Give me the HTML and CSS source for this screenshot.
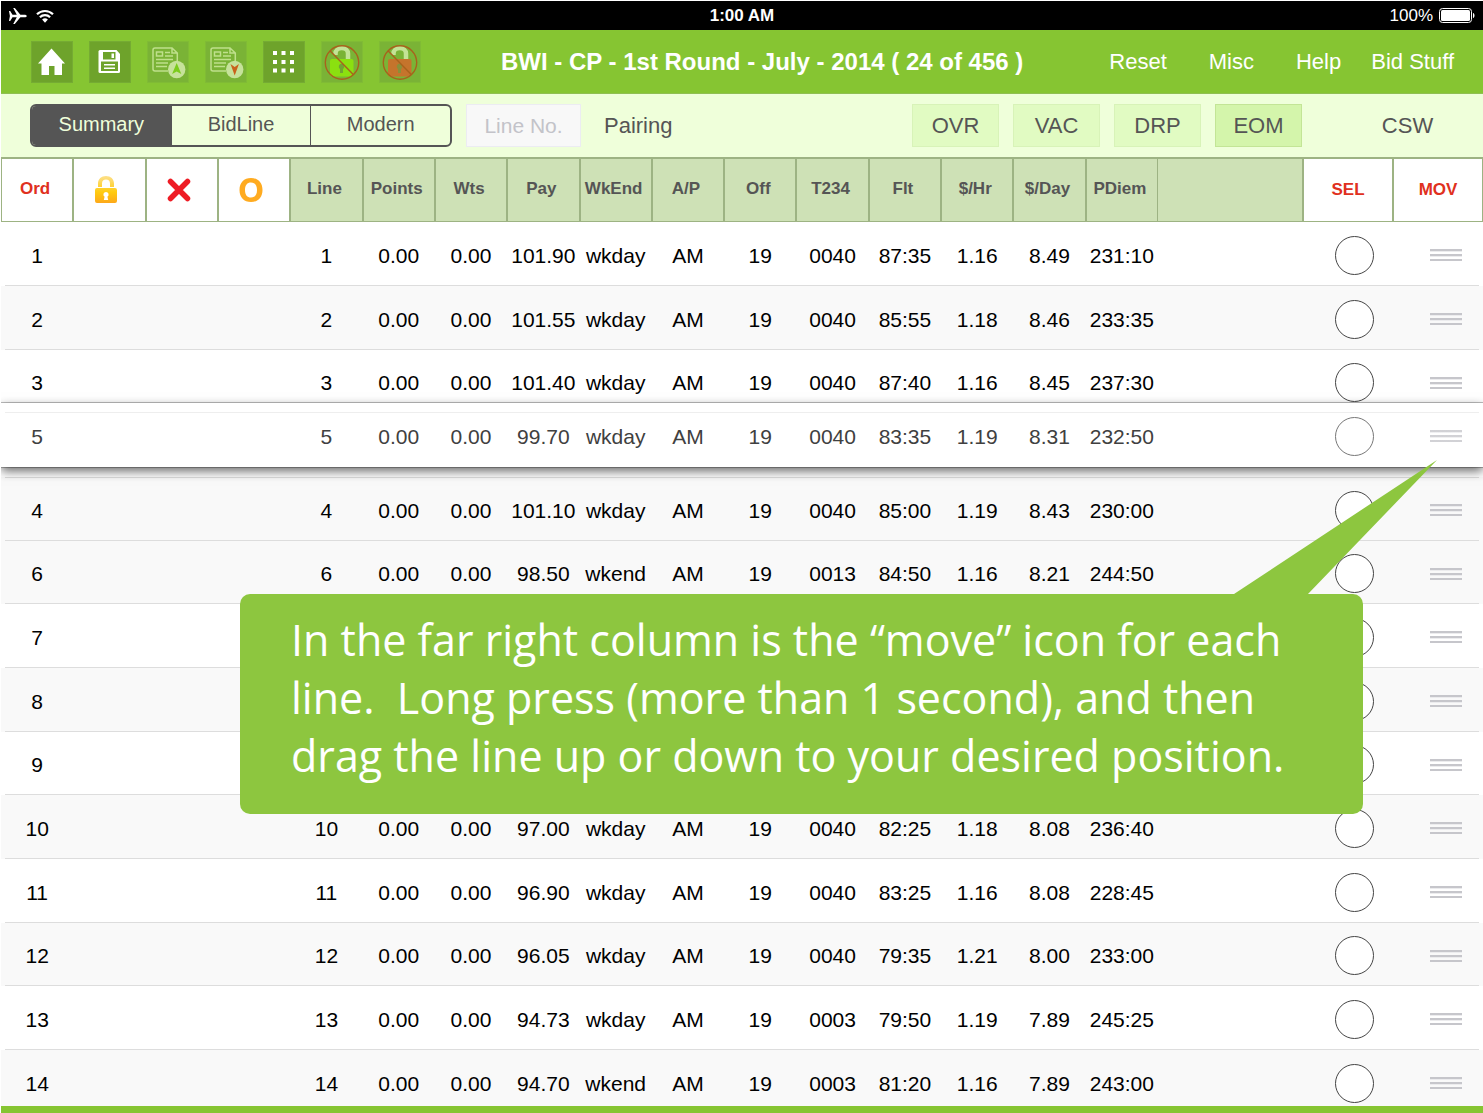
FILE: index.html
```html
<!DOCTYPE html>
<html lang="en">
<head>
<meta charset="utf-8">
<meta name="viewport" content="width=device-width, initial-scale=1">
<title>BWI - CP - 1st Round - July - 2014</title>
<link rel="stylesheet" href="styles.css">
</head>
<body>
<div class="app">
  <div class="status">
    <div class="status-side">
      <svg class="plane" viewBox="0 0 18 16" width="18" height="16" aria-hidden="true"><path fill="#fff" d="M0 3h1.200l2.300 3.700h4.300L4.200 0h1.600l5.600 6.700h4.100c1.200 0 2.300.6 2.300 1.300s-1.100 1.300-2.300 1.300h-4.100L5.800 16H4.200l3.600-6.700H3.500L1.200 13H0l.9-5z"/></svg>
      <svg viewBox="0 0 18 14" width="18" height="14" aria-hidden="true"><g fill="none" stroke="#fff" stroke-width="2.200"><path d="M1 5.200a11.600 11.600 0 0 1 16 0"/><path d="M3.900 8.300a7.300 7.300 0 0 1 10.200 0"/></g><path fill="#fff" d="M9 13.800l-2.900-3.200a4.300 4.300 0 0 1 5.800 0z"/></svg>
    </div>
    <span class="clock">1:00 AM</span>
    <div class="status-side status-right">
      <span>100%</span>
      <svg viewBox="0 0 36 15" width="36" height="15" aria-hidden="true"><rect x=".5" y=".5" width="32" height="14" rx="3" fill="none" stroke="#fff"/><rect x="2" y="2" width="29" height="11" rx="1.500" fill="#fff"/><path fill="#fff" d="M34 5c2 .6 2 4.400 0 5z"/></svg>
    </div>
  </div>

  <header class="toolbar">
    <div class="tools">
      <button class="tool" type="button" aria-label="Home"><svg viewBox="0 0 42 42"><path fill="#fff" d="M20.500 7.500L34 22.500h-3V34h-7.500v-9h-5.500v9h-7.500V22.500H7z"/></svg></button>
      <button class="tool" type="button" aria-label="Save"><svg viewBox="0 0 42 42"><path fill="#fff" d="M11 9h16.500l3.500 4v17.500q0 1.500-1.500 1.500H11q-1.500 0-1.500-1.500v-20Q9.500 9 11 9z"/><path fill="#6ea32b" d="M14 11h12.500v7.500H14zM12 20.500h17V30H12z"/><path fill="#fff" d="M22.500 12.500h2.500v4.500h-2.500zM15 23h11v1.500H15zM15 26.500h11V28H15z"/></svg></button>
      <button class="tool" type="button" aria-label="Move up" disabled><svg viewBox="0 0 42 42"><g fill="none" stroke="#bfe08c" stroke-width="1.500"><path d="M21 30H8q-2 0-2-2V9q0-2 2-2h17l5.300 5v8M25 7v5h5"/><path d="M9.500 11h6v4h-6zM18 11.500h5M18 15h8M9 18.500h17M9 22h12M9 25.500h11"/></g><circle cx="29.700" cy="28.500" r="8.700" fill="#c6e29b"/><path fill="#7bcb1d" d="M29.700 22l4.600 11-4.600-2.600-4.600 2.600z"/></svg></button>
      <button class="tool" type="button" aria-label="Move down" disabled><svg viewBox="0 0 42 42"><g fill="none" stroke="#bfe08c" stroke-width="1.500"><path d="M21 30H8q-2 0-2-2V9q0-2 2-2h17l5.300 5v8M25 7v5h5"/><path d="M9.500 11h6v4h-6zM18 11.500h5M18 15h8M9 18.500h17M9 22h12M9 25.500h11"/></g><circle cx="29.700" cy="28.500" r="8.700" fill="#c6e29b"/><path fill="#c9621b" d="M29.700 34.500L25.500 23l4.200 3 4.200-3z"/></svg></button>
      <button class="tool" type="button" aria-label="Grid"><svg viewBox="0 0 42 42"><path fill="#fff" d="M10 10h4v4h-4zm8.500 0h4v4h-4zm8.500 0h4v4h-4zM10 19h4v4h-4zm8.500 0h4v4h-4zm8.500 0h4v4h-4zM10 27.500h4v4h-4zm8.500 0h4v4h-4zm8.500 0h4v4h-4z"/></svg></button>
      <button class="tool" type="button" aria-label="Clear top locks" disabled><svg viewBox="0 0 42 42"><path d="M14.500 14v-1.500a6.200 5.500 0 0 1 12.500 0V18" fill="none" stroke="#c3e396" stroke-width="4.500"/><rect x="9" y="18" width="23.500" height="17.500" rx="2" fill="#8be010"/><path fill="#6fa534" d="M20.500 22.500a3.200 3.200 0 0 1 1.500 5.700V32h-3v-3.800a3.200 3.200 0 0 1 1.500-5.700z"/><g fill="none" stroke="#a8621c" stroke-width="1.400"><circle cx="21" cy="21.500" r="16.700"/><path d="M9 9.700l23.500 24"/></g></svg></button>
      <button class="tool" type="button" aria-label="Clear bottom locks" disabled><svg viewBox="0 0 42 42"><path d="M14.500 14v-1.500a6.200 5.500 0 0 1 12.500 0V18" fill="none" stroke="#c3e396" stroke-width="4.500"/><rect x="9" y="18" width="23.500" height="17.500" rx="2" fill="#c5742c"/><path fill="#8a8f38" d="M20.500 22.500a3.200 3.200 0 0 1 1.500 5.700V32h-3v-3.800a3.200 3.200 0 0 1 1.500-5.700z"/><g fill="none" stroke="#a8621c" stroke-width="1.400"><circle cx="21" cy="21.500" r="16.700"/><path d="M9 9.700l23.500 24"/></g></svg></button>
    </div>
    <h1 class="title">BWI - CP - 1st Round - July - 2014 ( 24 of 456 )</h1>
    <nav class="menu">
      <button type="button">Reset</button>
      <button type="button">Misc</button>
      <button type="button">Help</button>
      <button type="button">Bid Stuff</button>
    </nav>
  </header>

  <div class="filters">
    <div class="segments">
      <button class="segment selected" type="button" aria-pressed="true">Summary</button>
      <button class="segment" type="button" aria-pressed="false">BidLine</button>
      <button class="segment" type="button" aria-pressed="false">Modern</button>
    </div>
    <input class="line-no" type="text" placeholder="Line No." aria-label="Line No.">
    <button class="plain" type="button">Pairing</button>
    <div class="toggles">
      <button class="toggle" type="button">OVR</button>
      <button class="toggle" type="button">VAC</button>
      <button class="toggle" type="button">DRP</button>
      <button class="toggle on" type="button">EOM</button>
    </div>
    <button class="plain csw" type="button">CSW</button>
  </div>

  <main class="lines">
    <table class="grid">
      <colgroup><col span="16"><col class="col-filler"><col class="col-action" span="2"></colgroup>
      <thead>
        <tr>
          <th class="key" scope="col">Ord</th>
          <th class="key mark" scope="col" aria-label="Lock"><svg viewBox="0 0 24 30" width="24" height="30"><defs><linearGradient id="gold" x1="0" y1="0" x2="0" y2="1"><stop offset="0" stop-color="#fde08a"/><stop offset=".6" stop-color="#ffcb10"/><stop offset="1" stop-color="#fda81a"/></linearGradient></defs><path fill="url(#gold)" fill-rule="evenodd" d="M4 12V8.500C4 4 7.300 1 12 1s8 3 8 7.500V12h-4V8.500C16 6 14.500 4.500 12 4.500S8 6 8 8.500V12zM3 13h18q2 0 2 2v11q0 2-2 2H3q-2 0-2-2V15q0-2 2-2zM12 17a2.600 2.600 0 0 0-1.400 4.800L9.800 25h4.400l-.8-3.200A2.600 2.600 0 0 0 12 17z"/></svg></th>
          <th class="key mark" scope="col" aria-label="Exclude"><svg viewBox="0 0 24 24" width="24" height="24"><path d="M3.500 3.500l17 17M20.500 3.500l-17 17" stroke="#ee1c25" stroke-width="5.500" stroke-linecap="round"/></svg></th>
          <th class="key mark" scope="col" aria-label="Open"><svg viewBox="0 0 24 26" width="24" height="26"><path fill="#ffab20" fill-rule="evenodd" d="M12 1c7 0 11.500 4.500 11.500 12S19 25 12 25 .5 20.500.5 13 5 1 12 1zm0 4.500c-3.800 0-6 2.500-6 7.500s2.200 7.500 6 7.500 6-2.500 6-7.500-2.200-7.500-6-7.500z"/></svg></th>
          <th scope="col">Line</th><th scope="col">Points</th><th scope="col">Wts</th><th scope="col">Pay</th><th scope="col">WkEnd</th><th scope="col">A/P</th><th scope="col">Off</th><th scope="col">T234</th><th scope="col">Flt</th><th scope="col">$/Hr</th><th scope="col">$/Day</th><th scope="col">PDiem</th>
          <th class="filler"></th>
          <th class="key action" scope="col">SEL</th>
          <th class="key action" scope="col">MOV</th>
        </tr>
      </thead>
      <tbody>
        <tr><td>1</td><td colspan="3"></td><td>1</td><td>0.00</td><td>0.00</td><td>101.90</td><td>wkday</td><td>AM</td><td>19</td><td>0040</td><td>87:35</td><td>1.16</td><td>8.49</td><td>231:10</td><td></td><td class="sel"><input type="checkbox" aria-label="Select line 1"></td><td class="mov"><button class="grip" type="button" aria-label="Move line 1"></button></td></tr>
        <tr><td>2</td><td colspan="3"></td><td>2</td><td>0.00</td><td>0.00</td><td>101.55</td><td>wkday</td><td>AM</td><td>19</td><td>0040</td><td>85:55</td><td>1.18</td><td>8.46</td><td>233:35</td><td></td><td class="sel"><input type="checkbox" aria-label="Select line 2"></td><td class="mov"><button class="grip" type="button" aria-label="Move line 2"></button></td></tr>
        <tr><td>3</td><td colspan="3"></td><td>3</td><td>0.00</td><td>0.00</td><td>101.40</td><td>wkday</td><td>AM</td><td>19</td><td>0040</td><td>87:40</td><td>1.16</td><td>8.45</td><td>237:30</td><td></td><td class="sel"><input type="checkbox" aria-label="Select line 3"></td><td class="mov"><button class="grip" type="button" aria-label="Move line 3"></button></td></tr>
        <tr class="dragged"><td>5</td><td colspan="3"></td><td>5</td><td>0.00</td><td>0.00</td><td>99.70</td><td>wkday</td><td>AM</td><td>19</td><td>0040</td><td>83:35</td><td>1.19</td><td>8.31</td><td>232:50</td><td></td><td class="sel"><input type="checkbox" aria-label="Select line 5"></td><td class="mov"><button class="grip" type="button" aria-label="Move line 5"></button></td></tr>
        <tr class="displaced"><td>4</td><td colspan="3"></td><td>4</td><td>0.00</td><td>0.00</td><td>101.10</td><td>wkday</td><td>AM</td><td>19</td><td>0040</td><td>85:00</td><td>1.19</td><td>8.43</td><td>230:00</td><td></td><td class="sel"><input type="checkbox" aria-label="Select line 4"></td><td class="mov"><button class="grip" type="button" aria-label="Move line 4"></button></td></tr>
        <tr><td>6</td><td colspan="3"></td><td>6</td><td>0.00</td><td>0.00</td><td>98.50</td><td>wkend</td><td>AM</td><td>19</td><td>0013</td><td>84:50</td><td>1.16</td><td>8.21</td><td>244:50</td><td></td><td class="sel"><input type="checkbox" aria-label="Select line 6"></td><td class="mov"><button class="grip" type="button" aria-label="Move line 6"></button></td></tr>
        <tr><td>7</td><td colspan="16"></td><td class="sel"><input type="checkbox" aria-label="Select line 7"></td><td class="mov"><button class="grip" type="button" aria-label="Move line 7"></button></td></tr>
        <tr><td>8</td><td colspan="16"></td><td class="sel"><input type="checkbox" aria-label="Select line 8"></td><td class="mov"><button class="grip" type="button" aria-label="Move line 8"></button></td></tr>
        <tr><td>9</td><td colspan="16"></td><td class="sel"><input type="checkbox" aria-label="Select line 9"></td><td class="mov"><button class="grip" type="button" aria-label="Move line 9"></button></td></tr>
        <tr><td>10</td><td colspan="3"></td><td>10</td><td>0.00</td><td>0.00</td><td>97.00</td><td>wkday</td><td>AM</td><td>19</td><td>0040</td><td>82:25</td><td>1.18</td><td>8.08</td><td>236:40</td><td></td><td class="sel"><input type="checkbox" aria-label="Select line 10"></td><td class="mov"><button class="grip" type="button" aria-label="Move line 10"></button></td></tr>
        <tr><td>11</td><td colspan="3"></td><td>11</td><td>0.00</td><td>0.00</td><td>96.90</td><td>wkday</td><td>AM</td><td>19</td><td>0040</td><td>83:25</td><td>1.16</td><td>8.08</td><td>228:45</td><td></td><td class="sel"><input type="checkbox" aria-label="Select line 11"></td><td class="mov"><button class="grip" type="button" aria-label="Move line 11"></button></td></tr>
        <tr><td>12</td><td colspan="3"></td><td>12</td><td>0.00</td><td>0.00</td><td>96.05</td><td>wkday</td><td>AM</td><td>19</td><td>0040</td><td>79:35</td><td>1.21</td><td>8.00</td><td>233:00</td><td></td><td class="sel"><input type="checkbox" aria-label="Select line 12"></td><td class="mov"><button class="grip" type="button" aria-label="Move line 12"></button></td></tr>
        <tr><td>13</td><td colspan="3"></td><td>13</td><td>0.00</td><td>0.00</td><td>94.73</td><td>wkday</td><td>AM</td><td>19</td><td>0003</td><td>79:50</td><td>1.19</td><td>7.89</td><td>245:25</td><td></td><td class="sel"><input type="checkbox" aria-label="Select line 13"></td><td class="mov"><button class="grip" type="button" aria-label="Move line 13"></button></td></tr>
        <tr><td>14</td><td colspan="3"></td><td>14</td><td>0.00</td><td>0.00</td><td>94.70</td><td>wkend</td><td>AM</td><td>19</td><td>0003</td><td>81:20</td><td>1.16</td><td>7.89</td><td>243:00</td><td></td><td class="sel"><input type="checkbox" aria-label="Select line 14"></td><td class="mov"><button class="grip" type="button" aria-label="Move line 14"></button></td></tr>
      </tbody>
    </table>

    <aside class="callout">
      <svg class="callout-tail" viewBox="0 0 204 136" width="204" height="136" aria-hidden="true"><path fill="#8dc63f" d="M203 0L0 134v2h74v-2z"/></svg>
      <p>In the far right column is the “move” icon for each<br>line.&nbsp; Long press (more than 1 second), and then<br>drag the line up or down to your desired position.</p>
    </aside>
  </main>
  <footer class="base"></footer>
</div>
</body>
</html>
```

FILE: styles.css
```css
* { box-sizing: border-box; }

body {
  margin: 0;
  background: #fff;
  color: #000;
  font-family: "Liberation Sans", Arial, sans-serif;
  font-size: 21px;
}

button,
input {
  margin: 0;
  padding: 0;
  border: 0;
  background: none;
  color: inherit;
  font: inherit;
}

svg { display: block; }

.app {
  display: flex;
  flex-direction: column;
  height: 100vh;
  padding: 1px 0 0 1px;
}

/* Status bar */
.status {
  display: flex;
  align-items: center;
  flex: none;
  height: 29px;
  padding: 0 8px;
  background: #000;
  color: #fff;
  font-size: 17px;
}

.status-side {
  display: flex;
  align-items: center;
  flex: 1;
  gap: 9px;
}

.status-right {
  justify-content: flex-end;
  gap: 6px;
}

.clock { font-weight: 700; }

/* Toolbar */
.toolbar {
  display: flex;
  align-items: center;
  flex: none;
  height: 64px;
  padding: 0 29px 0 30px;
  border-bottom: 1px solid #8fbf52;
  background: #86c532;
  color: #fff;
}

.tools {
  display: flex;
  gap: 16px;
}

.tool {
  width: 42px;
  height: 42px;
  background: #6ea32b;
  box-shadow: inset 0 0 0 1px #75ab33;
}

.tool:disabled {
  background: #7ab336;
  box-shadow: inset 0 0 0 1px #80bb35;
}

.title {
  flex: 1;
  margin: 0;
  padding-right: 6px;
  font-size: 24px;
  text-align: center;
  white-space: nowrap;
}

.menu {
  display: flex;
  gap: 42px;
  font-size: 22px;
}

.menu button:last-child { margin-left: -12px; }

/* Filter bar */
.filters {
  display: flex;
  align-items: center;
  flex: none;
  height: 63px;
  padding: 0 32px 0 29px;
  background: #efffda;
  color: #555;
  font-size: 22px;
}

.segments {
  display: flex;
  width: 422px;
  height: 43px;
  overflow: hidden;
  border: 2px solid #555;
  border-radius: 6px;
  font-size: 20px;
}

.segment {
  flex: 1;
  padding-bottom: 3px;
}

.segment + .segment { border-left: 1px solid #555; }

.selected {
  background: #555;
  color: #efffda;
}

.line-no {
  width: 115px;
  height: 43px;
  margin: 0 23px 0 14px;
  border: 1px solid #ececf2;
  background: #f8f8f8;
  font-size: 21px;
  text-align: center;
}

.line-no::placeholder { color: #c3c3c9; }

.toggles {
  display: flex;
  gap: 14px;
  margin-left: auto;
}

.toggle {
  width: 87px;
  height: 43px;
  border: 1px solid #d8f3b8;
  background: #e1fbc2;
}

.on {
  border-color: #c3e596;
  background: #d4f5ab;
}

.csw {
  width: 87px;
  margin-left: 62px;
}

/* Line list */
.lines {
  position: relative;
  flex: 1;
  min-height: 0;
  overflow: hidden;
}

.grid {
  width: 100%;
  table-layout: fixed;
  border-spacing: 0;
  text-align: center;
}

.col-filler { width: 145px; }
.col-action { width: 90px; }

th {
  height: 65px;
  padding: 0 4px 3px 0;
  border: 1px solid #9db383;
  border-top-width: 2px;
  background: #cee1b6;
  color: #555;
  font-size: 17px;
}

.key {
  background: #fff;
  color: #e03020;
}

.mark { padding: 0 6px 0 0; }

.mark svg { margin: 0 auto; }

.action { padding: 0; }

.filler { border-left: 0; }

tbody { background: #f9f9f9; }

tbody tr {
  height: 64px;
  background: linear-gradient(#ddd, #ddd) 50% 100% / calc(100% - 8px) 1px no-repeat #fff;
}

tbody tr:nth-child(3n) { height: 63px; }

tbody tr:nth-child(even),
tbody tr.displaced { background-color: #f9f9f9; }

tbody tr.displaced {
  background-image: linear-gradient(#ddd, #ddd), linear-gradient(#ddd, #ddd);
  background-position: 50% 100%, 50% 0;
}

td {
  padding: 3px 0 0;
  white-space: nowrap;
}

.sel { padding: 2px 0 0 13px; }
.mov { padding: 2px 0 0 16px; }

.sel input {
  display: block;
  width: 39px;
  height: 39px;
  margin: 0 auto;
  border: 1px solid #444;
  border-radius: 50%;
  background: #fff;
  appearance: none;
}

.grip {
  display: block;
  width: 32px;
  height: 12px;
  margin: 0 auto;
  background: repeating-linear-gradient(#c6c6cb 0 2px, #ececee 2px 3px, transparent 3px 5px);
}

/* The row being dragged floats over its neighbours */
tbody tr.dragged {
  position: relative;
  top: -10px;
  background: linear-gradient(#eee, #eee) 50% 9px / calc(100% - 8px) 1px no-repeat #fff;
  box-shadow: 0 0 0 1px rgba(0, 0, 0, 0.25), 0 4px 10px rgba(0, 0, 0, 0.6);
  color: #404040;
}

.dragged input { border-color: #777; }
.dragged .grip { opacity: 0.8; }

/* Help callout */
.callout {
  position: absolute;
  top: 437px;
  left: 239px;
  right: 120px;
  padding: 17px 51px 29px;
  border-radius: 10px;
  background: #8dc63f;
  color: #fff;
  font-family: "Open Sans", "Noto Sans", sans-serif;
  font-size: 43px;
  line-height: 58px;
}

.callout p {
  margin: 0;
  white-space: nowrap;
}

.callout-tail {
  position: absolute;
  right: -75px;
  bottom: calc(100% - 2px);
}

.base {
  flex: none;
  height: 7px;
  background: #86c532;
}
```
